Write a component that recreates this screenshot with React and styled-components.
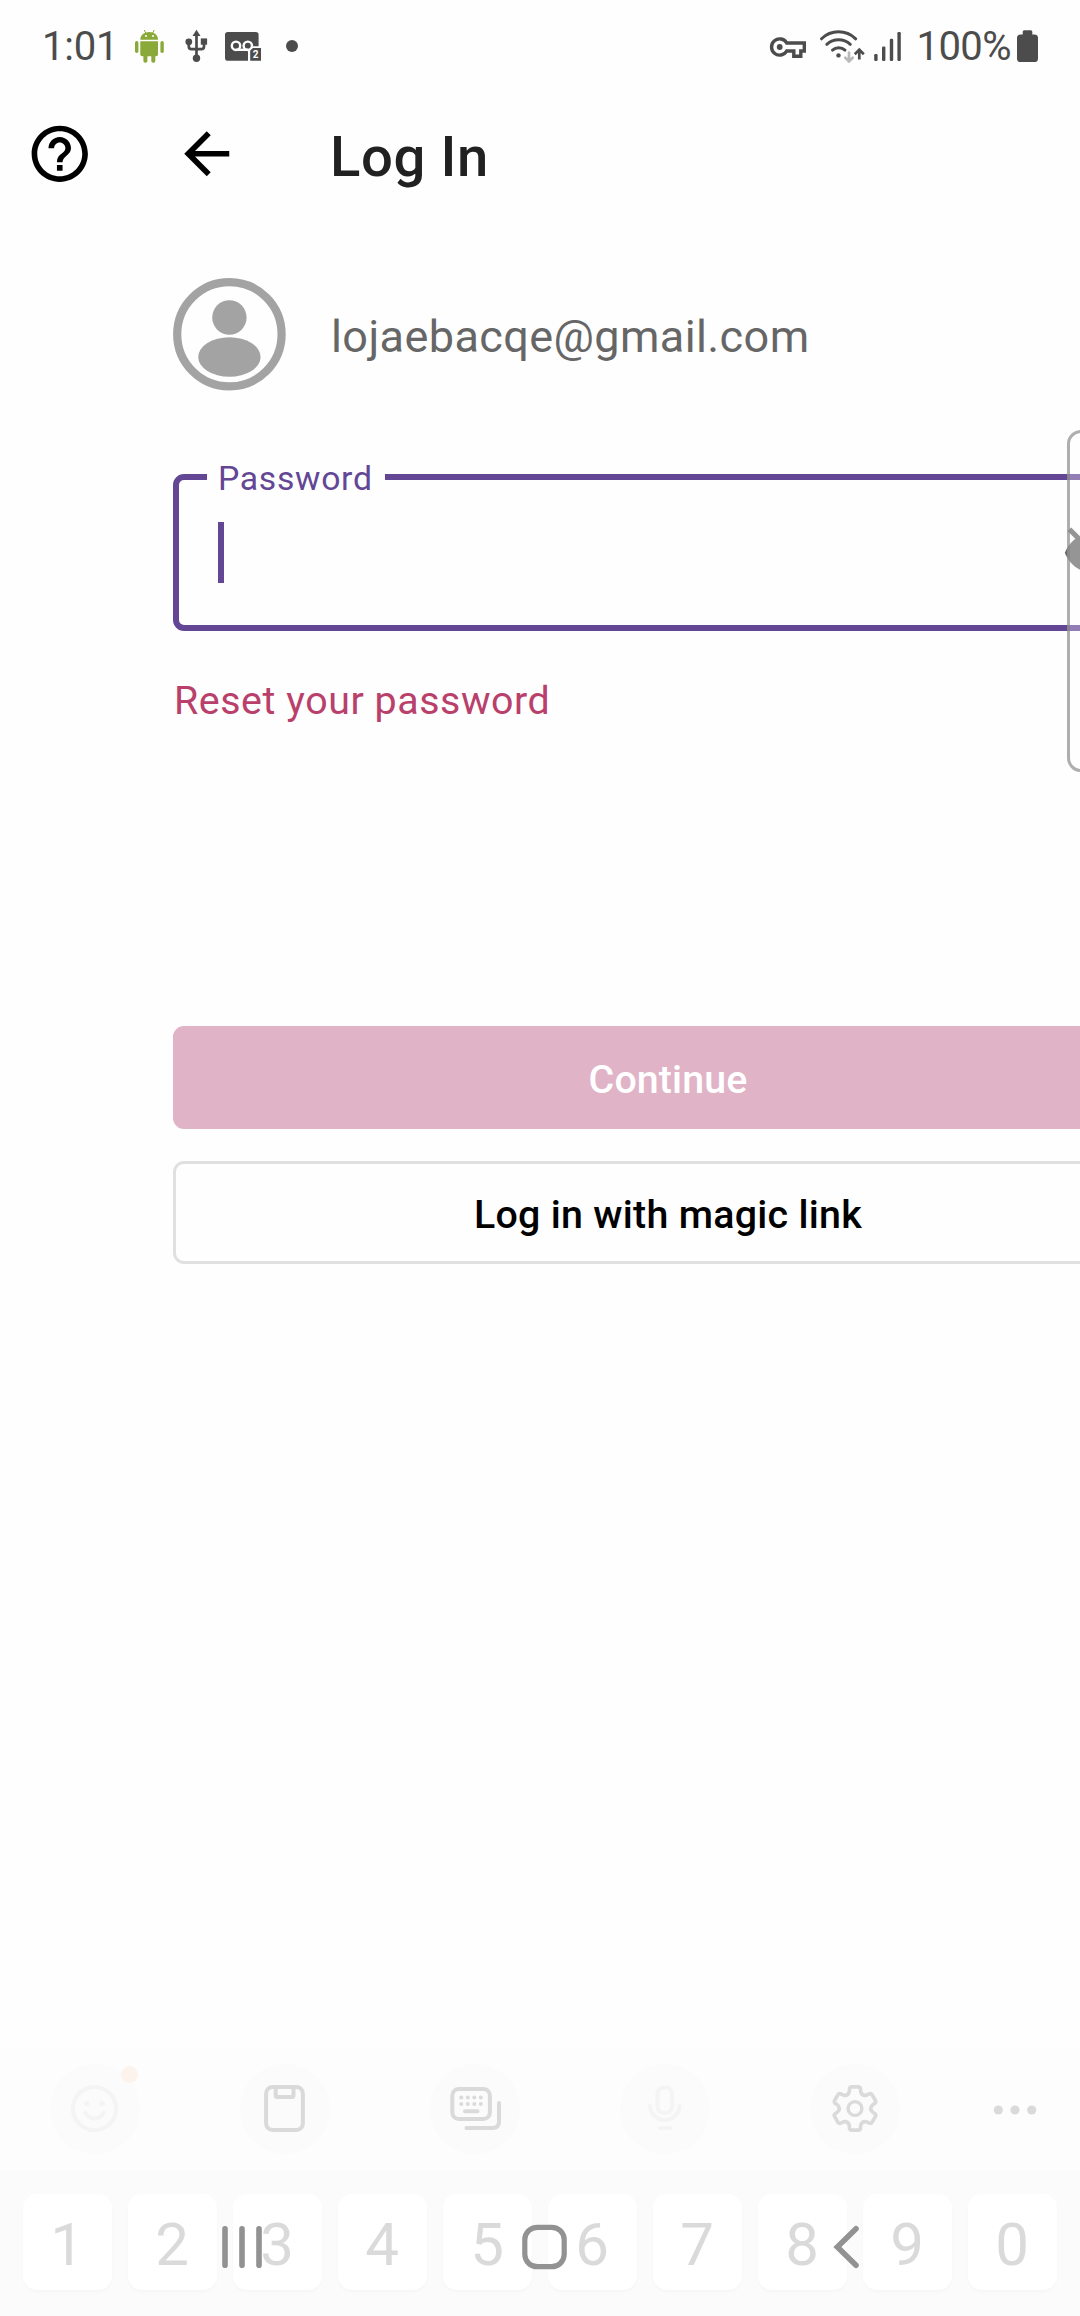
import React from "react";
import styled, { createGlobalStyle } from "styled-components";

const ink = "#4c4c4c";
const purple = "#634795";
const pageBg = "#fefefe";
const faint = "#dadada";
const fainter = "#f4f4f4";

const GlobalStyle = createGlobalStyle`
  *, *::before, *::after { box-sizing: border-box; }
  body { margin: 0; background: ${pageBg}; overflow: hidden; }
  svg { display: block; flex: none; overflow: visible; }
`;

const Screen = styled.div`
  position: relative;
  display: flex;
  flex-direction: column;
  width: 1080px;
  height: 2316px;
  overflow: hidden;
  background: ${pageBg};
  font-family: Roboto, "Noto Sans", sans-serif;
`;

const StatusBar = styled.div`
  display: flex;
  justify-content: space-between;
  align-items: center;
  flex: none;
  height: 92px;
  padding: 0 42px;
`;

const StatusGroup = styled.div`
  display: flex;
  align-items: center;
`;

const StatusText = styled.span`
  width: ${(p) => p.$width}px;
  padding-top: 2px;
  font-size: 40px;
  line-height: 48px;
  letter-spacing: ${(p) => p.$spacing || 0}px;
  white-space: nowrap;
  color: ${ink};
`;

const StatusIcon = styled.svg`
  margin-left: ${(p) => p.$gap || 0}px;
`;

const Header = styled.header`
  display: flex;
  align-items: center;
  flex: none;
  height: 123px;
  padding-left: 26px;
`;

const IconButton = styled.button`
  display: flex;
  flex: none;
  margin: 0 ${(p) => p.$after || 0}px 0 0;
  padding: 0;
  border: 0;
  background: none;
`;

const Title = styled.h1`
  margin: 6px 0 0;
  font-size: 56.25px;
  font-weight: 500;
  line-height: 66px;
  letter-spacing: 0.6px;
  color: #212121;
`;

const Form = styled.main`
  display: flex;
  flex-direction: column;
  flex: none;
  width: 990px;
  margin: 63px 0 0 172.5px;
`;

const Account = styled.div`
  display: flex;
  align-items: center;
  gap: 46px;
  height: 112.5px;
`;

const Email = styled.span`
  padding-top: 6px;
  font-size: 45px;
  line-height: 54px;
  letter-spacing: 0.4px;
  color: #666;
`;

const Field = styled.div`
  position: relative;
  display: flex;
  align-items: center;
  justify-content: space-between;
  height: 157px;
  margin-top: 83.5px;
  padding: 0 27px 0 39px;
  border: 6px solid ${purple};
  border-radius: 11px;
`;

const FieldLabel = styled.label`
  position: absolute;
  left: 28.5px;
  top: -21px;
  width: 178px;
  padding-left: 11px;
  background: ${pageBg};
  font-size: 33.75px;
  line-height: 40px;
  letter-spacing: 0.7px;
  color: ${purple};
`;

const Caret = styled.span`
  width: 6px;
  height: 61px;
  background: ${purple};
`;

const ResetLink = styled.a`
  margin: 47px 0 0 1.5px;
  font-size: 39.375px;
  line-height: 46px;
  letter-spacing: 0.55px;
  color: #b9406b;
`;

const Actions = styled.div`
  display: flex;
  flex-direction: column;
  gap: 32px;
  margin-top: 302px;
`;

const Button = styled.button`
  height: 103px;
  padding: 5px 0 0;
  border: ${(p) => (p.$outlined ? "3px solid #e0e0e0" : "0")};
  border-radius: 11px;
  background: ${(p) => (p.$outlined ? "transparent" : "#e0b3c7")};
  font: 500 39.375px/46px Roboto, sans-serif;
  letter-spacing: ${(p) => (p.$outlined ? 0.28 : 0.1)}px;
  text-indent: 1px;
  color: ${(p) => (p.$outlined ? "#000" : "#fff")};
`;

const EdgePanel = styled.aside`
  position: absolute;
  left: 1067px;
  top: 430px;
  width: 40px;
  height: 342px;
  border: 3px solid rgba(130, 130, 130, 0.65);
  border-radius: 14px;
  background: rgba(255, 255, 255, 0.3);
`;

const Keyboard = styled.section`
  display: flex;
  flex-direction: column;
  margin-top: auto;
  height: 268px;
`;

const KeyboardTools = styled.div`
  display: flex;
  align-items: center;
  gap: 99.8px;
  height: 123px;
  padding: 0 0 1px 50.4px;
  background: #fdfdfd;
`;

const Tool = styled.div`
  position: relative;
  display: flex;
  flex: none;
  width: 90px;
  height: 90px;
  margin-left: ${(p) => (p.$plain ? -29 : 0)}px;
  border-radius: 50%;
  background: ${(p) => (p.$plain ? "none" : "#fbfbfb")};
`;

const Badge = styled.span`
  position: absolute;
  left: 71px;
  top: 2px;
  width: 17px;
  height: 17px;
  border-radius: 50%;
  background: #fdf3ed;
`;

const NumberRow = styled.div`
  display: grid;
  grid-template-columns: repeat(10, 89px);
  column-gap: 16px;
  height: 145px;
  padding: 23px 0 0 23px;
  background: #fbfbfb;
`;

const Key = styled.div`
  display: flex;
  justify-content: center;
  height: 96px;
  padding: 15px 1px 0 0;
  border-radius: 14px;
  background: #fff;
  box-shadow: 0 2px 3px rgba(0, 0, 0, 0.025);
  font-size: 60px;
  line-height: 71px;
  color: ${faint};
`;

const NavBar = styled.nav`
  position: absolute;
  left: 0;
  right: 0;
  bottom: 0;
  display: flex;
  justify-content: space-between;
  align-items: center;
  height: 135px;
  padding: 0 211px 3px 216px;
`;

const AndroidIcon = () => (
  <StatusIcon $gap={13} width="30" height="36" viewBox="135 28 30 36" fill="#89a938">
    <path d="M140.3 39.8C140.3 34.8 144.3 32 149.2 32S158 34.8 158 39.8Z" />
    <path d="M146 33.5 144.2 30M152.4 33.5 154.2 30" stroke="#89a938" strokeWidth="1" />
    <path d="M140.3 41.2H158V54.5Q158 56.3 156 56.3H142.3Q140.3 56.3 140.3 54.5Z" />
    <rect x="135" y="41" width="3.4" height="12" rx="1.7" />
    <rect x="160.4" y="41" width="3.4" height="12" rx="1.7" />
    <rect x="143.4" y="52" width="4" height="10.8" rx="1.8" />
    <rect x="151.3" y="52" width="4" height="10.8" rx="1.8" />
    <circle cx="146" cy="36" r="1" fill="#fff" />
    <circle cx="153" cy="36" r="1" fill="#fff" />
  </StatusIcon>
);

const UsbIcon = () => (
  <StatusIcon $gap={20} width="23" height="36" viewBox="185 28 23 36" fill={ink}>
    <path d="M196.5 34V58M188.8 42V46.5Q188.8 49.2 191.5 49.2H201.3Q204 49.2 204 46.5V42" fill="none" stroke={ink} strokeWidth="2.7" />
    <path d="M196.5 29.8 200.5 36H192.5Z" />
    <circle cx="196.5" cy="58.3" r="3.7" />
    <circle cx="188.8" cy="41.8" r="3.4" />
    <rect x="200.8" y="38.4" width="6.3" height="6.3" />
  </StatusIcon>
);

const VoicemailIcon = () => (
  <StatusIcon $gap={17} width="37" height="36" viewBox="225 28 37 36">
    <rect x="225" y="32" width="33.6" height="28.7" rx="2.8" fill={ink} />
    <g fill="none" stroke="#fff" strokeWidth="2.4">
      <circle cx="236" cy="45.8" r="4.2" />
      <circle cx="247.8" cy="45.8" r="4.2" />
      <path d="M236 49.8H248" />
    </g>
    <path d="M252 46.3H262V62H248V50Z" fill={pageBg} />
    <path d="M253 48H261V60.8H250.2V50.6Z" fill={ink} />
    <text x="255.6" y="58" textAnchor="middle" fontSize="10" fontWeight="700" fontFamily="Roboto" fill="#fff">2</text>
  </StatusIcon>
);

const MoreDot = () => (
  <StatusIcon $gap={24} width="12" height="36" viewBox="286 28 12 36">
    <circle cx="292" cy="46" r="6" fill={ink} />
  </StatusIcon>
);

const KeyIcon = () => (
  <StatusIcon width="37" height="36" viewBox="770 28 37 36" fill="none" stroke={ink} strokeWidth="3.4">
    <path d="M786.7 43H804.3V51H800.8V56.3H793.8V51H786.7A8.1 8.1 0 1 1 786.7 43Z" />
    <circle cx="779.7" cy="47" r="2.9" fill={ink} stroke="none" />
  </StatusIcon>
);

const WifiIcon = () => (
  <StatusIcon $gap={12} width="46" height="36" viewBox="819 28 46 36" fill="none" stroke={ink} strokeWidth="3" strokeLinecap="round">
    <path d="M821.5 38.8C831 29.5 846 29.5 855.7 38.8" />
    <path d="M826.8 44.3C833.5 38.2 843.6 38.2 850.3 44.3" />
    <path d="M832.5 50.1C836 46.9 841.5 46.9 845 50.1" />
    <circle cx="838.5" cy="55.4" r="2.2" fill={ink} stroke="none" />
    <path d="M849 52.5V61M845.3 57.8 849 61.3 852.7 57.8" stroke="#b9b9b9" strokeWidth="2.7" />
    <path d="M859.3 59.4V50M854.8 54.2 859.3 49.6 863.8 54.2" strokeWidth="2.7" strokeLinecap="butt" />
  </StatusIcon>
);

const SignalIcon = () => (
  <StatusIcon $gap={9} width="28" height="36" viewBox="874 28 28 36" fill={ink}>
    <rect x="874.2" y="54" width="3.4" height="7" rx="1.2" />
    <rect x="882" y="46.6" width="3.4" height="14.4" rx="1.2" />
    <rect x="889.8" y="38.8" width="3.4" height="22.2" rx="1.2" />
    <rect x="897.4" y="32" width="3.4" height="29" rx="1.2" />
  </StatusIcon>
);

const BatteryIcon = () => (
  <StatusIcon width="21" height="36" viewBox="1017 28 21 36" fill={ink}>
    <rect x="1022.7" y="30.2" width="9.6" height="7" rx="1.5" />
    <rect x="1017" y="34.5" width="21" height="27.5" rx="3.6" />
  </StatusIcon>
);

const HelpIcon = () => (
  <svg width="67.5" height="67.5" viewBox="0 0 24 24">
    <path d="M11 18h2v-2h-2v2zm1-16C6.480 2 2 6.480 2 12s4.480 10 10 10 10-4.480 10-10S17.520 2 12 2zm0 18c-4.410 0-8-3.590-8-8s3.590-8 8-8 8 3.590 8 8-3.590 8-8 8zm0-14c-2.210 0-4 1.790-4 4h2c0-1.100.9-2 2-2s2 .9 2 2c0 2-3 1.750-3 5h2c0-2.250 3-2.500 3-5 0-2.210-1.790-4-4-4z" />
  </svg>
);

const BackIcon = () => (
  <svg width="67.5" height="67.5" viewBox="0 0 24 24">
    <path d="M20 11H7.830l5.590-5.590L12 4l-8 8 8 8 1.410-1.410L7.830 13H20v-2z" />
  </svg>
);

const Avatar = () => (
  <svg width="112.5" height="112.5" viewBox="0 0 112.5 112.5" fill="#a3a3a3">
    <circle cx="56.4" cy="56.25" r="52.2" fill="none" stroke="#a3a3a3" strokeWidth="8.2" />
    <circle cx="56.4" cy="39.5" r="17.2" />
    <ellipse cx="56.4" cy="79" rx="31.2" ry="19.8" />
  </svg>
);

const HiddenEyeIcon = () => (
  <svg width="67.5" height="67.5" viewBox="0 0 24 24" fill="#686868">
    <path d="M12 7c2.760 0 5 2.240 5 5 0 .650-.130 1.260-.360 1.830l2.920 2.920c1.510-1.260 2.700-2.890 3.430-4.750-1.730-4.390-6-7.500-11-7.500-1.400 0-2.740.250-3.980.7l2.160 2.160C10.740 7.130 11.350 7 12 7zM2 4.270l2.280 2.280.46.46C3.080 8.300 1.780 10.020 1 12c1.730 4.390 6 7.500 11 7.500 1.550 0 3.030-.3 4.380-.84l.42.42L19.730 22 21 20.730 3.270 3 2 4.270zM7.530 9.800l1.550 1.550c-.050.210-.080.430-.080.650 0 1.660 1.340 3 3 3 .22 0 .44-.030.650-.080l1.550 1.550c-.670.330-1.410.530-2.200.530-2.760 0-5-2.240-5-5 0-.790.2-1.530.53-2.200z" />
  </svg>
);

const ToolSvg = ({ color = faint, children }) => (
  <svg width="90" height="90" viewBox="-45 -45 90 90" fill="none" stroke={color} strokeWidth="4" strokeLinecap="round" strokeLinejoin="round">
    {children}
  </svg>
);

const polar = (r, deg) => {
  const a = (deg * Math.PI) / 180;
  return `${(r * Math.sin(a)).toFixed(2)} ${(-r * Math.cos(a) - 0.5).toFixed(2)}`;
};

const gearPath =
  [0, 60, 120, 180, 240, 300]
    .map((t, i) =>
      `${i ? "L" : "M"}${polar(21.0, t - 15)} Q${polar(22.2, t - 13.2)} ${polar(22, t - 10)} L${polar(22, t + 10)} Q${polar(22.2, t + 13.2)} ${polar(21.0, t + 15)} L${polar(17.6, t + 19)} Q${polar(14.2, t + 30)} ${polar(17.6, t + 41)}`
    )
    .join(" ") + "Z";

const EmojiTool = () => (
  <Tool>
    <ToolSvg color={fainter}>
      <circle cx="-0.5" cy="-0.5" r="21.6" />
      <path d="M-9.8 3.5C-6 11.3 5 11.3 8.8 3.5" />
      <circle cx="-8" cy="-5.5" r="2.7" fill={fainter} stroke="none" />
      <circle cx="7" cy="-5.5" r="2.7" fill={fainter} stroke="none" />
    </ToolSvg>
    <Badge />
  </Tool>
);

const ClipboardTool = () => (
  <Tool>
    <ToolSvg>
      <rect x="-18.9" y="-22" width="36.8" height="43" rx="6.5" />
      <path d="M-9.3-21V-13.5Q-9.3-12-7.8-12H7Q8.5-12 8.5-13.5V-21" />
    </ToolSvg>
  </Tool>
);

const KeyboardTool = () => (
  <Tool>
    <ToolSvg>
      <rect x="-22.7" y="-20" width="37.6" height="30" rx="6.5" />
      <path d="M-8.5 19H17.5Q24 19 24 12.5V-6M-10 2.3H2.5" />
      <g fill={faint} stroke="none">
        {[-13.7, -7.2, -0.7, 5.8].map((x) => (
          <React.Fragment key={x}>
            <circle cx={x} cy="-11.5" r="2" />
            <circle cx={x} cy="-5" r="2" />
          </React.Fragment>
        ))}
      </g>
    </ToolSvg>
  </Tool>
);

const MicTool = () => (
  <Tool>
    <ToolSvg color={fainter}>
      <rect x="-7.5" y="-21.5" width="14.6" height="25.5" rx="6.5" />
      <path d="M-15-3C-13.5 15.5 13.2 15.5 14.6-3M-5 19H5.2" />
    </ToolSvg>
  </Tool>
);

const SettingsTool = () => (
  <Tool>
    <ToolSvg>
      <path d={gearPath} strokeWidth="3.6" />
      <circle cx="0" cy="-0.5" r="6.9" strokeWidth="3.4" />
    </ToolSvg>
  </Tool>
);

const MoreTool = () => (
  <Tool $plain>
    <ToolSvg>
      <g fill={faint} stroke="none">
        <circle cx="-16.7" cy="1" r="4.6" />
        <circle cx="0" cy="1" r="4.6" />
        <circle cx="16.7" cy="1" r="4.6" />
      </g>
    </ToolSvg>
  </Tool>
);

const NavIcon = ({ children }) => (
  <svg width="52" height="52" viewBox="-26 -26 52 52" fill="none" stroke="#929292" strokeWidth="5.6" strokeLinecap="round">
    {children}
  </svg>
);

export default function App() {
  return (
    <>
      <GlobalStyle />
      <Screen>
        <StatusBar>
          <StatusGroup>
            <StatusText $width={80} $spacing={-0.2}>1:01</StatusText>
            <AndroidIcon />
            <UsbIcon />
            <VoicemailIcon />
            <MoreDot />
          </StatusGroup>
          <StatusGroup>
            <KeyIcon />
            <WifiIcon />
            <SignalIcon />
            <StatusIcon width="14.5" height="36" />
            <StatusText $width={100.5} $spacing={-0.6}>100%</StatusText>
            <BatteryIcon />
          </StatusGroup>
        </StatusBar>

        <Header>
          <IconButton $after={79.5} aria-label="Help"><HelpIcon /></IconButton>
          <IconButton $after={89.5} aria-label="Back"><BackIcon /></IconButton>
          <Title>Log In</Title>
        </Header>

        <Form>
          <Account>
            <Avatar />
            <Email>lojaebacqe@gmail.com</Email>
          </Account>
          <Field>
            <FieldLabel>Password</FieldLabel>
            <Caret />
            <HiddenEyeIcon />
          </Field>
          <ResetLink>Reset your password</ResetLink>
          <Actions>
            <Button>Continue</Button>
            <Button $outlined>Log in with magic link</Button>
          </Actions>
        </Form>

        <Keyboard>
          <KeyboardTools>
            <EmojiTool />
            <ClipboardTool />
            <KeyboardTool />
            <MicTool />
            <SettingsTool />
            <MoreTool />
          </KeyboardTools>
          <NumberRow>
            {"1234567890".split("").map((digit) => (
              <Key key={digit}>{digit}</Key>
            ))}
          </NumberRow>
        </Keyboard>

        <EdgePanel />
        <NavBar>
          <NavIcon><path d="M-17-18.2V18.2M0-18.2V18.2M17-18.2V18.2" /></NavIcon>
          <NavIcon><rect x="-18.2" y="-19.7" width="39.4" height="39.4" rx="12.5" strokeWidth="5.2" /></NavIcon>
          <NavIcon><path d="M13-18.2-5.6 0 13 18.2" /></NavIcon>
        </NavBar>
      </Screen>
    </>
  );
}
